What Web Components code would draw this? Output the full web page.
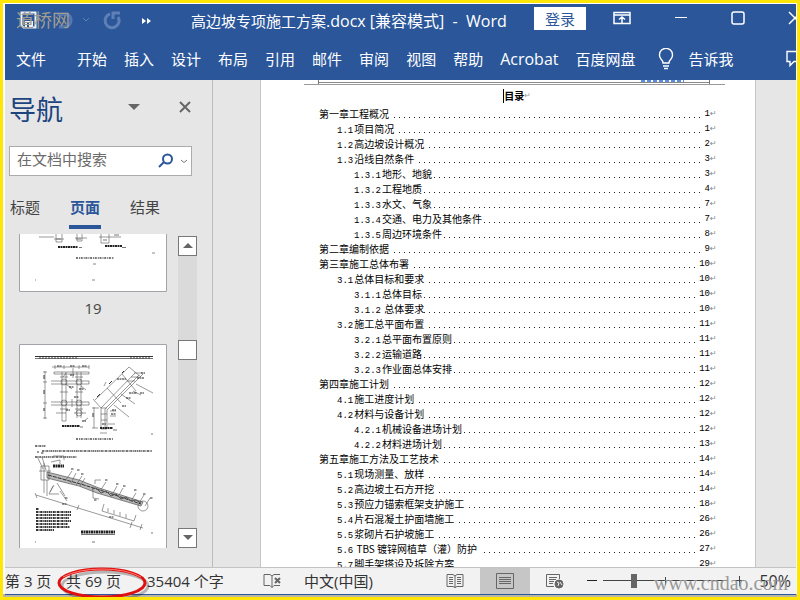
<!DOCTYPE html>
<html lang="zh-CN">
<head>
<meta charset="utf-8">
<title>高边坡专项施工方案.docx [兼容模式] - Word</title>
<style>
  html, body {
    margin: 0;
    height: 100%;
    overflow: hidden;
  }

  body {
    font: 15px/20px "Open Sans", "Noto Sans CJK SC", sans-serif;
    color: #333;
  }
</style>
</head>
<body>

<template id="template-word-window">
  <style>
    :host {
      box-sizing: border-box;
      position: relative;
      display: grid;
      grid-template-rows: 76px minmax(0, 1fr) 27px;
      height: 100vh;
      padding: 1px 1px 3px 2px;
      border: 3px solid #ffe607;
      background: #fff;
      box-shadow: inset 0 -3px #b9b7a4;
      overflow: hidden;
    }

    .workspace {
      display: grid;
      grid-template-columns: 208px minmax(0, 1fr);
      background: #e6e6e6;
      min-height: 0;
    }

    .site {
      position: absolute;
      right: 9px;
      bottom: 2px;
      font: 20px/24px "Liberation Serif", serif;
      color: #999;
      pointer-events: none;
    }

    .logo {
      position: absolute;
      left: 13px;
      top: 4px;
      font: 18px/24px "Noto Sans CJK SC", sans-serif;
      color: #a39d8e;
      pointer-events: none;
    }

    .circle {
      position: absolute;
      left: 50px;
      bottom: -4px;
      pointer-events: none;
    }
  </style>

  <slot name="header"></slot>
  <div class="workspace"><slot></slot></div>
  <slot name="footer"></slot>
  <div class="logo">道桥网</div>
  <div class="site">www.cndao.com</div>
  <svg class="circle" width="100" height="40" fill="none">
    <ellipse cx="52" cy="25" rx="43" ry="14" stroke="#000" stroke-opacity=".25" stroke-width="3"/>
    <ellipse cx="49" cy="22" rx="43" ry="14" stroke="#e01010" stroke-width="3"/>
    <path d="M10 16Q25 8 49 8T88 16" stroke="#ff7a70"/>
  </svg>
</template>

<template id="template-word-header">
  <style>
    :host {
      display: grid;
      grid-template-rows: 35px 40px;
      background: #2b579a;
      color: #fff;
      overflow: hidden;
    }

    button {
      padding: 0;
      border: 0;
      background: none;
      color: inherit;
      font: inherit;
      flex: none;
    }

    svg {
      display: block;
      fill: none;
      stroke: currentColor;
    }

    .title, nav {
      display: flex;
      align-items: center;
      white-space: nowrap;
    }

    .quick {
      display: flex;
      align-items: center;
      width: 175px;
      padding-left: 11px;
      box-sizing: border-box;
      flex: none;
    }

    .quick button {
      margin-bottom: 4px;
    }

    h1 {
      margin: 0;
      padding: 0 0 2px 11px;
      width: 332px;
      font: inherit;
      white-space: pre;
    }

    .latin {
      font-size: 16px;
    }

    .title .login {
      width: 52px;
      height: 23px;
      margin: 0 auto 6px 11px;
      background: #fff;
      color: #2b579a;
    }

    .controls {
      display: flex;
      align-items: center;
      gap: 43px;
      margin: 0 -6px 7px 0;
    }

    nav {
      gap: 17px;
      padding-left: 11px;
    }

    nav button:first-child {
      margin-right: 14px;
    }

    .tell {
      display: flex;
      align-items: center;
      gap: 15px;
      margin-left: 5px;
    }

    .comment {
      margin: 0 -8px 0 auto;
    }
  </style>

  <div class="title">
    <div class="quick">
      <button aria-label="保存"><svg width="22" height="20"><path d="M5.500 2.500h14v15h-12l-2-2z" stroke="#eef2f8" stroke-width="2"/><path d="M9 11h8v6H9z" fill="#eef2f8" stroke="none"/><path d="M11 13h2v4h-2z" fill="#2b579a" stroke="none"/></svg></button>
      <button aria-label="撤消"><svg width="38" height="20"><path d="M19 5q14-3 14 5t-12 7" stroke="#5478b2" stroke-width="3"/></svg></button>
      <button aria-label="撤消选项"><svg width="20" height="20"><path d="M7 8l3 3 3-3" stroke="#5e80b5"/></svg></button>
      <button aria-label="恢复"><svg width="36" height="20"><path d="M14 4a7 7 0 1 0 8 3" stroke="#5e80b5" stroke-width="3"/><path d="M17 9V3h7" stroke="#5e80b5" stroke-width="3"/></svg></button>
      <button aria-label="更多命令"><svg width="30" height="20"><path d="M10 8l4 3-4 3zM15 8l4 3-4 3z" fill="#fff" stroke="none"/></svg></button>
    </div>
    <h1>高边坡专项施工方案<span class="latin">.docx [兼容模式]  -  Word</span></h1>
    <button class="login">登录</button>
    <div class="controls">
      <button aria-label="功能区显示选项"><svg width="18" height="14"><path d="M1 1.500h16v11H1zM1 4h16M9 12V6M6 8.500L9 6l3 2.500" stroke-width="1.500"/></svg></button>
      <button aria-label="最小化"><svg width="14" height="14"><path d="M1 6.500h12"/></svg></button>
      <button aria-label="最大化"><svg width="14" height="14"><rect x="1" y="1" width="12" height="12" rx="2" stroke-width="1.500"/></svg></button>
      <button aria-label="关闭"><svg width="14" height="14"><path d="M1 1l12 12M13 1L1 13" stroke-width="1.500"/></svg></button>
    </div>
  </div>
  <nav>
    <button>文件</button><button>开始</button><button>插入</button><button>设计</button><button>布局</button><button>引用</button><button>邮件</button><button>审阅</button><button>视图</button><button>帮助</button><button class="latin">Acrobat</button><button>百度网盘</button>
    <button class="tell"><svg width="16" height="22"><path d="M5 15q0-2-2-4A6.500 6.500 0 1 1 13 11q-2 2-2 4zM5 18h6M6 20.500h4" stroke-width="1.400"/></svg>告诉我</button>
    <button class="comment" aria-label="批注"><svg width="18" height="18"><path d="M1 1.500h16v10H8l-4 4v-4H1z" stroke-width="1.400"/></svg></button>
  </nav>
</template>

<template id="template-nav-pane">
  <style>
    :host {
      display: flex;
      flex-direction: column;
      min-height: 0;
      border-right: 1px solid #bcbcbc;
    }

    button {
      padding: 0;
      border: 0;
      background: none;
      color: inherit;
      font: inherit;
    }

    svg {
      display: block;
    }

    header {
      display: flex;
      align-items: center;
      height: 58px;
      padding: 0 20px 0 4px;
    }

    h2 {
      margin: 0 auto 0 0;
      font: 27px/36px "Noto Sans CJK SC", sans-serif;
      color: #1c457f;
    }

    header button {
      margin: 0 0 5px 38px;
    }

    .search {
      display: flex;
      align-items: center;
      box-sizing: border-box;
      height: 30px;
      margin: 8px 20px 0 4px;
      padding: 0 3px 0 7px;
      border: 1px solid #ababab;
      background: #fff;
    }

    input {
      flex: 1;
      min-width: 0;
      padding: 0 0 4px;
      border: 0;
      outline: 0;
      background: none;
      font: inherit;
    }

    input::placeholder {
      color: #6b6b6b;
      opacity: 1;
    }

    .tabs {
      display: flex;
      gap: 28px;
      height: 58px;
      padding: 19px 0 0 4px;
      box-sizing: border-box;
      align-items: flex-start;
    }

    .tabs button {
      height: 34px;
      padding: 0 1px 10px;
      color: #444;
      box-sizing: border-box;
    }

    .tabs .active {
      border-bottom: 4px solid #2b579a;
      padding-bottom: 6px;
      font-weight: bold;
      color: #2b579a;
    }

    .pages {
      display: flex;
      justify-content: space-between;
      flex: 1;
      min-height: 0;
      padding: 0 15px 19px 14px;
    }

    .thumbs {
      width: 148px;
      overflow: hidden;
      text-align: center;
      color: #444;
    }

    .thumbs svg {
      background: #fff;
    }

    .number {
      height: 52px;
      line-height: 32px;
      box-sizing: border-box;
    }

    .scroll {
      display: flex;
      flex-direction: column;
      justify-content: space-between;
      width: 19px;
      margin-top: 2px;
      background: #dadada;
    }

    .scroll button {
      display: grid;
      place-items: center;
      box-sizing: border-box;
      height: 20px;
      border: 1px solid #777;
      background: #fff;
    }

    .scroll .handle {
      margin-bottom: 85px;
    }
  </style>

  <header>
    <h2>导航</h2>
    <button aria-label="任务窗格选项"><svg width="12" height="8"><path d="M0 1h12L6 7z" fill="#666"/></svg></button>
    <button aria-label="关闭"><svg width="14" height="14"><path d="M2 2l10 10M12 2L2 12" stroke="#666" stroke-width="2"/></svg></button>
  </header>
  <div class="search">
    <input type="text" aria-label="在文档中搜索" placeholder="在文档中搜索">
    <button aria-label="搜索"><svg width="16" height="16" fill="none" stroke="#2b579a" stroke-width="2"><circle cx="9.500" cy="6" r="4.500"/><path d="M6 9L1 14"/></svg></button>
    <button aria-label="搜索选项"><svg width="14" height="10"><path d="M7 4l3 2.500L13 4" fill="none" stroke="#777"/></svg></button>
  </div>
  <div class="tabs">
    <button>标题</button><button class="active">页面</button><button>结果</button>
  </div>
  <div class="pages">
    <div class="thumbs">
      <svg width="148" height="58" fill="none" stroke="#555">
        <path d="M.5 0v57.500h147V0" stroke="#a0a3a7"/>
        <g stroke-width=".6"><path d="M20 3h15M37 0v8M43 0v8M37 8h6M58 0v7M63 0v7M58 7h5M82 0v9M90 0v9M80 3h22M82 9h8M35 5h10M56 4h12"/></g>
        <path d="M39 13h20M86 12h17" stroke="#222" stroke-width="2" stroke-dasharray="2 .5"/>
        <path d="M60 13.500h3M103 13.500h4M37 5h5M57 5h5M84 6h4M95 1h5" stroke="#777"/>
        <path d="M57 24h38" stroke="#777" stroke-width="2" stroke-dasharray="2 1 1 .7"/>
        <path d="M133 19h3M74 30h3M16 46h1M73 46h3" stroke="#888"/>
      </svg>
      <div class="number">19</div>
      <svg width="148" height="205" fill="none" stroke="#555">
        <path d="M.5 205V.5h147V205" stroke="#a0a3a7"/>
        <path d="M16 12.500h118" stroke="#333"/>
        <path d="M16 14.500h118" stroke="#777"/>
        <path d="M20 14h38M111 14h20" stroke="#444" stroke-dasharray="2 1"/>
        <!-- frame beam plan -->
        <g stroke-width=".6">
          <path d="M33 23h37M36 21v4M45 21v4M60 21v4M70 21v4M26 27v48M24 28h4M24 38h4M24 59h4M24 74h4"/>
          <path d="M43 28v49M47 28v49M58 28v46M62 28v46M35 28h35M35 30h35M32 37h38M32 40h38M32 58h38M32 61h38M35 28v2M70 28v2M70 37v3M70 58v3"/>
          <path d="M41 33h8M56 33h8M41 48h8M56 48h8M41 65h8M56 65h8M47 40l6 5M62 42l5 4M44 33l3-4M54 24v10M53 55v8"/>
          <circle cx="45" cy="38" r="3"/><circle cx="60" cy="38" r="3"/><circle cx="45" cy="59" r="3"/><circle cx="60" cy="59" r="3"/><circle cx="60" cy="69" r="3"/>
          <path d="M37 69h10M55 69h12M43 77h4M65 77l4-3"/>
        </g>
        <!-- side section of the beam -->
        <g stroke-width=".6">
          <path d="M82 85V64l34-35M86 85V65l34-34M88 85V66l36-36M82 85h6M82 64h6M82 70h6M82 76h6M76 56l34-33M74 55l8 9M88 44l14 15M103 30l14 17M110 23l12 10M85 42l2-4M75 63v21M73 64h7M73 84h6M81 89h7M115 29h8M112 33h8M108 37h8"/>
          <path d="M95 61l15 12M102 50l14 10M117 40l17 9M114 47l8 4M91 67h6M91 72h6M89 80h7"/>
        </g>
        <path d="M38 22h5M51 22h5M63 22h5M51 31h4M50 43h5M60 45h5M55 53h5M47 66h4M98 35h9M110 49h8M118 34h7M93 66h4M92 70h5M103 62h4M107 54h5M122 29h4M83 80h4M121 49h4M63 77h4" stroke="#222" stroke-dasharray="2 .5"/>
        <path d="M25 31v4M25 46v4M25 64v3M74 69v4M78 53l3-3M90 40l3-3M103 29l2-2" stroke="#333"/>
        <path d="M43 82h18M81 84h13" stroke="#222" stroke-width="2" stroke-dasharray="2 .5"/>
        <path d="M61 83h3M94 86h4M132 90h2" stroke="#777"/>
        <path d="M57 95h37" stroke="#777" stroke-width="2" stroke-dasharray="2 1 1 .7"/>
        <path d="M16 102h11M23 107h110M16 113h42" stroke="#777" stroke-width="2" stroke-dasharray="2 .6 1 .6"/>
        <!-- anchor cable along the slope -->
        <path d="M28 128L60 136L80 144L124 158L122 162L78 149L60 142L28 134z" fill="#bbb" stroke-width=".7"/>
        <path d="M29 131L65 141L90 149L122 160" stroke="#333" stroke-dasharray="4 1"/>
        <path d="M73 145l4-1 5 5 5-2 5 5 5-2 5 5 5-2 5 4 5-1 5 3" stroke="#555"/>
        <g stroke-width=".6">
          <path d="M22 122h8v14h-8zM20 127h12M25 119v30M34 142l-4 8h10M17 151l107 33M16 149l2 5M60 161l-2 5M113 178l-2 6M123 180l-2 6M28 152v-16M31 148l4-7M46 152l-8-13M41 147l7 10M32 118l9-2v4M34 112h11v4"/>
          <path d="M24 125l-6-13M27 126l-4-13M46 137l7-10M52 139l5-10M57 141l6-9M61 142l5-8M81 147l6-9M93 151l5-9M99 153l5-9M112 157l5-8M120 159l5-8M126 162l5-8M74 145v9l6 1M76 140v-4h6"/>
          <path d="M85 160l-2 7 32 10 2-6M89 164v4M95 166v4M101 168v4M107 170v4"/>
          <circle cx="124" cy="162" r="5"/>
        </g>
        <path d="M34 122h11" stroke="#222" stroke-width="3" stroke-dasharray="2 .5"/>
        <path d="M18 108h2M22 109h3M52 125h3M58 126h3M62 130h3M86 136h3M97 140h3M104 142h3M115 146h3M124 150h3M131 154h3M46 154h3M43 160h5M90 173h5M75 156h3" stroke="#333" stroke-dasharray="2 .5"/>
        <path d="M17 165h3M17 168h35M17 171h35M17 174h33M17 177h35M17 180h32M17 183h34M17 186h18" stroke="#333" stroke-width="2" stroke-dasharray="2 .5 1 .7"/>
        <path d="M62 188h34" stroke="#222" stroke-width="3" stroke-dasharray="2 .5"/>
        <path d="M62 190.500h34M132 189h2M16 198h1M73 198h3" stroke="#777"/>
      </svg>
    </div>
    <div class="scroll">
      <button aria-label="向上滚动"><svg width="10" height="6"><path d="M5 0l5 5H0z" fill="#666"/></svg></button>
      <button class="handle" aria-label="滚动条"></button>
      <button aria-label="向下滚动"><svg width="10" height="6"><path d="M0 0h10L5 5z" fill="#666"/></svg></button>
    </div>
  </div>
</template>

<template id="template-doc-page">
  <style>
    :host {
      display: flex;
      min-height: 0;
      overflow: hidden;
      padding: 0 40px 0 47px;
    }

    article {
      flex: 1;
      min-width: 0;
      border: solid #c6c6c6;
      border-width: 0 1px;
      background: #fff;
      color: #000;
      font: 10px/15px "Noto Sans CJK SC", sans-serif;
    }

    .rule {
      height: 4px;
      margin: 0 45px 0 57px;
      border-right: 1px solid #777;
      border-left: 1px solid #777;
      box-shadow: inset 0 -1px #fff, inset 0 -2px #888;
    }

    .link {
      height: 2px;
      margin: 0 25px 0 auto;
      width: 43px;
      background: repeating-linear-gradient(90deg, #5b8be0 0 4px, #fff 4px 6px);
    }

    .foot {
      height: 1px;
      margin: 0 30px 0 43px;
      background: #999;
    }

    h3 {
      display: flex;
      align-items: center;
      justify-content: center;
      margin: 3px 0 3px 18px;
      height: 15px;
      font: bold 10px/15px "Noto Sans CJK SC", sans-serif;
    }

    h3::before {
      content: '';
      height: 14px;
      border-left: 1px solid #000;
    }

    h3 span {
      font: 8px/15px "DejaVu Sans", sans-serif;
      color: #999;
    }

    .entries {
      padding: 0 38px 0 58px;
    }
  </style>

  <article>
    <div class="rule"><div class="link"></div></div>
    <div class="foot"></div>
    <h3>目录<span>↵</span></h3>
    <div class="entries"><slot></slot></div>
  </article>
</template>

<template id="template-toc-entry">
  <style>
    /* the dot leader runs under the whole row, label and page number cover it */
    :host {
      display: flex;
      justify-content: space-between;
      height: 15px;
      white-space: pre;
      background: linear-gradient(90deg, #fff 4px, #222 4px) right 2px top 11px / 5px 1px repeat-x;
    }

    .label, .end {
      display: flex;
      align-items: baseline;
      height: 15px;
      background: #fff;
    }

    .label {
      padding-right: 4px;
    }

    .end {
      padding-left: 3px;
    }

    :host([level="2"]) .label { padding-left: 18px; }
    :host([level="3"]) .label { padding: 0 0 0 35px; }

    .no, .page {
      font: 9px/15px "Liberation Mono", monospace;
    }

    .no:not(:empty) {
      margin-right: 1px;
    }

    .mark {
      width: 7px;
      font: 8px/15px "DejaVu Sans", sans-serif;
      color: #888;
    }
  </style>

  <div class="label"><span class="no"></span><slot></slot></div>
  <div class="end"><span class="page"></span><span class="mark">↵</span></div>
</template>

<template id="template-status-bar">
  <style>
    :host {
      display: flex;
      align-items: center;
      box-sizing: border-box;
      border-top: 1px solid #c3c3c3;
      box-shadow: 0 1px #2b579a;
      background: #f2f2f2;
      white-space: nowrap;
    }

    button {
      padding: 0;
      border: 0;
      background: none;
      color: inherit;
      font: inherit;
      flex: none;
    }

    svg {
      display: block;
      fill: none;
      stroke: #666;
    }

    .info {
      display: flex;
      align-items: center;
      padding-bottom: 1px;
    }

    .pages { width: 61px; text-align: left; }
    .total { width: 81px; text-align: left; }
    .words { width: 116px; text-align: left; }
    .proof { width: 41px; }

    .views {
      display: flex;
      align-self: stretch;
      margin-left: auto;
    }

    .views button {
      display: grid;
      place-items: center;
      width: 50px;
    }

    .views .active {
      background: #c6c6c6;
    }

    .zoom {
      display: flex;
      align-items: center;
      padding: 0 5px 1px 7px;
    }

    .zoom .percent {
      margin-left: 15px;
      font-size: 16px;
    }

    input {
      appearance: none;
      width: 124px;
      height: 16px;
      margin: 0 7px 0 6px;
      background:
        linear-gradient(#444, #444) center / 1px 8px no-repeat,
        linear-gradient(#444, #444) center / 100% 1px no-repeat;
    }

    input::-webkit-slider-thumb {
      appearance: none;
      width: 6px;
      height: 14px;
      background: #666;
    }
  </style>

  <div class="info">
    <button class="pages">第 3 页</button>
    <button class="total">共 69 页</button>
    <button class="words">35404 个字</button>
    <button class="proof" aria-label="校对"><svg width="18" height="16"><path d="M9 3L7 1.500H1v11h6l2 2zM9 3l2-1.500h6M9 14.500l2-2h6"/><path d="M12 5l5 5M17 5l-5 5" stroke-width="2"/></svg></button>
    <button>中文(中国)</button>
  </div>
  <div class="views">
    <button aria-label="阅读视图"><svg width="18" height="16"><path d="M9 3L7 1.500H1v12h6l2 1 2-1h6v-12h-6zM9 3v12M3 4.500h4M3 6.500h4M3 8.500h4M3 10.500h4M11 4.500h4M11 6.500h4M11 8.500h4M11 10.500h4"/></svg></button>
    <button class="active" aria-label="页面视图"><svg width="18" height="16"><path d="M.5.500h17v15H.5zM3 4.500h12M3 6.500h12M3 8.500h12M3 10.500h12"/></svg></button>
    <button aria-label="Web 版式视图"><svg width="18" height="16"><path d="M8 13.500H.5V1.500h13V6M3 4.500h8M3 6.500h7M3 8.500h5M3 10.500h4"/><circle cx="13" cy="11" r="4" fill="#666"/><path d="M11 9l2 1-1 3M14 9l2 3" stroke="#eee"/></svg></button>
  </div>
  <div class="zoom">
    <button aria-label="缩小"><svg width="10" height="10"><path d="M0 4.500h10" stroke="#222"/></svg></button>
    <input type="range" min="0" max="100" value="23" aria-label="显示比例">
    <button aria-label="放大"><svg width="10" height="10"><path d="M0 4.500h10M5.500 0v10" stroke="#444"/></svg></button>
    <button class="percent">50%</button>
  </div>
</template>

<word-window>
  <word-header slot="header"></word-header>
  <nav-pane></nav-pane>
  <doc-page>
    <toc-entry page="1">第一章工程概况</toc-entry>
    <toc-entry level="2" no="1.1" page="1">项目简况</toc-entry>
    <toc-entry level="2" no="1.2" page="2">高边坡设计概况</toc-entry>
    <toc-entry level="2" no="1.3" page="3">沿线自然条件</toc-entry>
    <toc-entry level="3" no="1.3.1" page="3">地形、地貌</toc-entry>
    <toc-entry level="3" no="1.3.2" page="4">工程地质</toc-entry>
    <toc-entry level="3" no="1.3.3" page="7">水文、气象</toc-entry>
    <toc-entry level="3" no="1.3.4" page="7">交通、电力及其他条件</toc-entry>
    <toc-entry level="3" no="1.3.5" page="8">周边环境条件</toc-entry>
    <toc-entry page="9">第二章编制依据</toc-entry>
    <toc-entry page="10">第三章施工总体布署</toc-entry>
    <toc-entry level="2" no="3.1" page="10">总体目标和要求</toc-entry>
    <toc-entry level="3" no="3.1.1" page="10">总体目标</toc-entry>
    <toc-entry level="3" no="3.1.2" page="10"> 总体要求</toc-entry>
    <toc-entry level="2" no="3.2" page="11">施工总平面布置</toc-entry>
    <toc-entry level="3" no="3.2.1" page="11">总平面布置原则</toc-entry>
    <toc-entry level="3" no="3.2.2" page="11">运输道路</toc-entry>
    <toc-entry level="3" no="3.2.3" page="11">作业面总体安排</toc-entry>
    <toc-entry page="12">第四章施工计划</toc-entry>
    <toc-entry level="2" no="4.1" page="12">施工进度计划</toc-entry>
    <toc-entry level="2" no="4.2" page="12">材料与设备计划</toc-entry>
    <toc-entry level="3" no="4.2.1" page="12">机械设备进场计划</toc-entry>
    <toc-entry level="3" no="4.2.2" page="13">材料进场计划</toc-entry>
    <toc-entry page="14">第五章施工方法及工艺技术</toc-entry>
    <toc-entry level="2" no="5.1" page="14">现场测量、放样</toc-entry>
    <toc-entry level="2" no="5.2" page="14">高边坡土石方开挖</toc-entry>
    <toc-entry level="2" no="5.3" page="18">预应力锚索框架支护施工</toc-entry>
    <toc-entry level="2" no="5.4" page="26">片石混凝土护面墙施工</toc-entry>
    <toc-entry level="2" no="5.5" page="26">浆砌片石护坡施工</toc-entry>
    <toc-entry level="2" no="5.6" page="27"> TBS 镀锌网植草（灌）防护</toc-entry>
    <toc-entry level="2" no="5.7" page="29">脚手架搭设及拆除方案</toc-entry>
  </doc-page>
  <status-bar slot="footer"></status-bar>
</word-window>

<script>
  (function(){
    class TemplateElement extends HTMLElement {
      constructor() {
        super();
        const template = document.querySelector('#template-' + this.localName);
        this.attachShadow({mode: 'open'}).appendChild(template.content.cloneNode(true));
      }
    }

    class TocEntryElement extends TemplateElement {
      static get observedAttributes() {
        return ['no', 'page'];
      }

      attributeChangedCallback(attributeName, oldValue, newValue) {
        this.shadowRoot.querySelector('.' + attributeName).textContent = newValue;
      }
    }

    customElements.define('word-window', class extends TemplateElement {});
    customElements.define('word-header', class extends TemplateElement {});
    customElements.define('nav-pane', class extends TemplateElement {});
    customElements.define('doc-page', class extends TemplateElement {});
    customElements.define('toc-entry', TocEntryElement);
    customElements.define('status-bar', class extends TemplateElement {});
  })();
</script>
</body>
</html>
